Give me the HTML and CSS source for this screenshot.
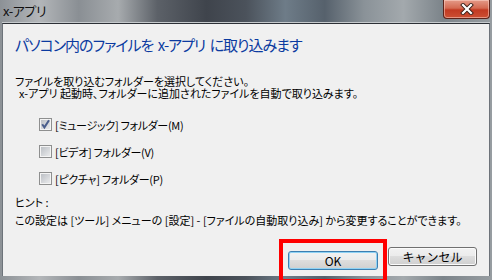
FILE: index.html
```html
<!DOCTYPE html>
<html lang="ja">
<head>
  <meta charset="UTF-8">
  <title>x-アプリ</title>
  <link rel="stylesheet" href="styles.css">
</head>
<body>

  <div class="window">
    <div class="titlebar">
      <span class="title">x-アプリ</span>
      <button class="close" aria-label="閉じる">
        <svg width="14" height="12" viewBox="0 0 14 12">
          <path d="M3 2 L11 10 M11 2 L3 10" stroke="#3b2019" stroke-width="4" stroke-linecap="square"/>
          <path d="M3 2 L11 10 M11 2 L3 10" stroke="#fff" stroke-width="2.2" stroke-linecap="square"/>
        </svg>
      </button>
    </div>

    <div class="client">
      <h1 class="instruction">パソコン内のファイルを x-アプリ に取り込みます</h1>

      <div class="desc">
        <p>ファイルを取り込むフォルダーを選択してください。</p>
        <p class="indent">x-アプリ 起動時、フォルダーに追加されたファイルを自動で取り込みます。</p>
      </div>

      <ul class="folders">
        <li>
          <span class="cb">
            <svg width="13" height="13" viewBox="0 0 13 13"><path d="M3.2 6.2 L5.4 9.4 L10 2.2" fill="none" stroke="#4a5e8c" stroke-width="2"/></svg>
          </span>
          [ミュージック] フォルダー(M)
        </li>
        <li><span class="cb"></span>[ビデオ] フォルダー(V)</li>
        <li><span class="cb"></span>[ピクチャ] フォルダー(P)</li>
      </ul>

      <p class="hint">ヒント :<br>この設定は [ツール] メニューの [設定] - [ファイルの自動取り込み] から変更することができます。</p>

      <div class="buttons">
        <div class="mark">
          <button class="btn default">OK</button>
        </div>
        <button class="btn">キャンセル</button>
      </div>
    </div>
  </div>

</body>
</html>
```

FILE: styles.css
```css
body {
	margin: 0;
	background: #000;
	font-family: "Noto Sans CJK JP", sans-serif;
	font-feature-settings: "palt";
}

.window {
	width: 492px;
	height: 280px;
	box-sizing: border-box;
	padding: 0 2px 4px;
	display: flex;
	flex-direction: column;
	background: linear-gradient(90deg, #8c9196 0%, #b3b6b9 8%, #8a8f94 16%, #a7abae 24%, #5c6168 32%, #3f444c 42%, #4b525b 50%, #6e7c88 58%, #56616c 66%, #8a9298 74%, #a3a9ad 82%, #7c848a 90%, #979da1 100%);
}

.titlebar {
	height: 22px;
	display: flex;
	justify-content: space-between;
	align-items: flex-start;
	border-bottom: 1px solid #c6cacd;
}

.title {
	padding: 3px 0 0 1px;
	font-size: 13px;
	line-height: 16px;
	color: #111;
	letter-spacing: -0.5px;
}

.close {
	width: 47px;
	height: 19px;
	padding: 0;
	border: 1px solid #5c231a;
	border-top: none;
	border-radius: 0 0 4px 4px;
	display: flex;
	align-items: center;
	justify-content: center;
	background: linear-gradient(#e49a88 0%, #d46a52 45%, #c23a22 55%, #cc4f33 100%);
	box-shadow: inset 0 0 0 1px rgba(255, 220, 210, 0.5);
}

.client {
	flex: 1;
	min-height: 0;
	background: #f0f0f0;
	border-top: 1px solid #2c3036;
	border-left: 1px solid #6d737a;
	border-right: 1px solid #6d737a;
	padding: 11px 12px 0;
	color: #000;
}

.instruction {
	margin: 0;
	font-size: 15px;
	line-height: 20px;
	font-weight: normal;
	letter-spacing: -1px;
	word-spacing: 2px;
	color: #0b3aa0;
}

.desc {
	margin-top: 20px;
	font-size: 11px;
}

.desc p {
	margin: 0;
	height: 12px;
	line-height: 12px;
}

.desc .indent {
	padding-left: 4px;
}

.folders {
	list-style: none;
	margin: 12px 0 0;
	padding: 0 0 0 24px;
}

.folders li {
	height: 27px;
	display: flex;
	align-items: center;
	font-size: 11px;
	letter-spacing: -0.3px;
}

.cb {
	width: 11px;
	height: 11px;
	margin-right: 3px;
	border: 1px solid #8e8f8f;
	background: linear-gradient(135deg, #b7bbc1, #eeeff0);
	box-shadow: inset 0 0 0 1px #f4f4f4;
	position: relative;
}

.cb svg {
	position: absolute;
	left: -1px;
	top: -1px;
}

.hint {
	margin: 1px 0 0;
	font-size: 11px;
	line-height: 18px;
}

.buttons {
	margin-top: 10px;
	display: flex;
	justify-content: flex-end;
	align-items: flex-start;
}

.mark {
	border: 4px solid #ff0000;
	padding: 4px 5px 8px;
}

.btn {
	width: 89px;
	height: 19px;
	margin: 8px 0 0 1px;
	padding: 0;
	font-family: "Noto Sans CJK JP", sans-serif;
	font-size: 12px;
	line-height: 17px;
	color: #000;
	border: 1px solid #707070;
	border-radius: 3px;
	background: linear-gradient(#f2f2f2 0%, #ebebeb 50%, #dddddd 50%, #cfcfcf 100%);
	box-shadow: inset 0 0 0 1px #fbfbfb;
}

.btn.default {
	width: 90px;
	margin: 0;
	border-color: #3c7fb1;
	box-shadow: inset 0 0 0 1px #8fd2f4;
}
```
